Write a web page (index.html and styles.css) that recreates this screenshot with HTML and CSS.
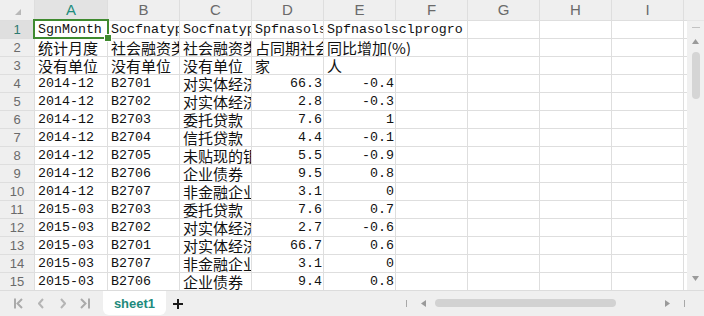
FILE: index.html
```html
<!DOCTYPE html>
<html>
<head>
<meta charset="utf-8">
<link rel="stylesheet" href="styles.css">
</head>
<body>
<div class="app">
  <div class="main">
    <div class="grid">
      <div class="corner"><svg class="tri" width="6" height="6" viewBox="0 0 6 6"><polygon points="6,0 6,6 0,6" fill="#b8b8b8"/></svg></div>
      <div class="ch sel">A</div><div class="ch">B</div><div class="ch">C</div><div class="ch">D</div><div class="ch">E</div><div class="ch">F</div><div class="ch">G</div><div class="ch">H</div><div class="ch">I</div><div class="ch"></div>

      <div class="rh sel">1</div><div class="c a1">SgnMonth</div><div class="c">Socfnatyp</div><div class="c">Socfnatyp</div><div class="c">Spfnasols</div><div class="c span2">Spfnasolsclprogro</div><div class="c"></div><div class="c"></div><div class="c"></div><div class="c"></div>

      <div class="rh">2</div><div class="c zh">统计月度</div><div class="c zh">社会融资类</div><div class="c zh">社会融资类</div><div class="c zh">占同期社会</div><div class="c zh span2">同比增加(%)</div><div class="c"></div><div class="c"></div><div class="c"></div><div class="c"></div>

      <div class="rh">3</div><div class="c zh">没有单位</div><div class="c zh">没有单位</div><div class="c zh">没有单位</div><div class="c zh">家</div><div class="c zh">人</div><div class="c"></div><div class="c"></div><div class="c"></div><div class="c"></div><div class="c"></div>

      <div class="rh">4</div><div class="c">2014-12</div><div class="c">B2701</div><div class="c zh">对实体经济</div><div class="c n">66.3</div><div class="c n">-0.4</div><div class="c"></div><div class="c"></div><div class="c"></div><div class="c"></div><div class="c"></div>

      <div class="rh">5</div><div class="c">2014-12</div><div class="c">B2702</div><div class="c zh">对实体经济</div><div class="c n">2.8</div><div class="c n">-0.3</div><div class="c"></div><div class="c"></div><div class="c"></div><div class="c"></div><div class="c"></div>

      <div class="rh">6</div><div class="c">2014-12</div><div class="c">B2703</div><div class="c zh">委托贷款</div><div class="c n">7.6</div><div class="c n">1</div><div class="c"></div><div class="c"></div><div class="c"></div><div class="c"></div><div class="c"></div>

      <div class="rh">7</div><div class="c">2014-12</div><div class="c">B2704</div><div class="c zh">信托贷款</div><div class="c n">4.4</div><div class="c n">-0.1</div><div class="c"></div><div class="c"></div><div class="c"></div><div class="c"></div><div class="c"></div>

      <div class="rh">8</div><div class="c">2014-12</div><div class="c">B2705</div><div class="c zh">未贴现的银</div><div class="c n">5.5</div><div class="c n">-0.9</div><div class="c"></div><div class="c"></div><div class="c"></div><div class="c"></div><div class="c"></div>

      <div class="rh">9</div><div class="c">2014-12</div><div class="c">B2706</div><div class="c zh">企业债券</div><div class="c n">9.5</div><div class="c n">0.8</div><div class="c"></div><div class="c"></div><div class="c"></div><div class="c"></div><div class="c"></div>

      <div class="rh">10</div><div class="c">2014-12</div><div class="c">B2707</div><div class="c zh">非金融企业</div><div class="c n">3.1</div><div class="c n">0</div><div class="c"></div><div class="c"></div><div class="c"></div><div class="c"></div><div class="c"></div>

      <div class="rh">11</div><div class="c">2015-03</div><div class="c">B2703</div><div class="c zh">委托贷款</div><div class="c n">7.6</div><div class="c n">0.7</div><div class="c"></div><div class="c"></div><div class="c"></div><div class="c"></div><div class="c"></div>

      <div class="rh">12</div><div class="c">2015-03</div><div class="c">B2702</div><div class="c zh">对实体经济</div><div class="c n">2.7</div><div class="c n">-0.6</div><div class="c"></div><div class="c"></div><div class="c"></div><div class="c"></div><div class="c"></div>

      <div class="rh">13</div><div class="c">2015-03</div><div class="c">B2701</div><div class="c zh">对实体经济</div><div class="c n">66.7</div><div class="c n">0.6</div><div class="c"></div><div class="c"></div><div class="c"></div><div class="c"></div><div class="c"></div>

      <div class="rh">14</div><div class="c">2015-03</div><div class="c">B2707</div><div class="c zh">非金融企业</div><div class="c n">3.1</div><div class="c n">0</div><div class="c"></div><div class="c"></div><div class="c"></div><div class="c"></div><div class="c"></div>

      <div class="rh">15</div><div class="c">2015-03</div><div class="c">B2706</div><div class="c zh">企业债券</div><div class="c n">9.4</div><div class="c n">0.8</div><div class="c"></div><div class="c"></div><div class="c"></div><div class="c"></div><div class="c"></div>
    </div>
    <div class="vscroll">
      <div class="vs-head"></div>
      <div class="vs-body">
        <div class="vs-dash"></div>
        <svg class="vs-up" width="7" height="5" viewBox="0 0 7 5"><polygon points="3.5,0 7,5 0,5" fill="#9a9a9a"/></svg>
        <div class="vs-thumb"></div>
        <svg class="vs-down" width="7" height="5" viewBox="0 0 7 5"><polygon points="0,0 7,0 3.5,5" fill="#9a9a9a"/></svg>
      </div>
    </div>
  </div>
  <div class="bottom">
    <div class="nav">
      <svg width="9" height="11" viewBox="0 0 9 11"><path d="M1 0.5V10.5M8 1L3.5 5.5L8 10" fill="none" stroke="#ababab" stroke-width="2"/></svg>
      <svg width="6" height="11" viewBox="0 0 6 11"><path d="M5 1L1 5.5L5 10" fill="none" stroke="#b5b5b5" stroke-width="2"/></svg>
      <svg width="6" height="11" viewBox="0 0 6 11"><path d="M1 1L5 5.5L1 10" fill="none" stroke="#b5b5b5" stroke-width="2"/></svg>
      <svg width="10" height="11" viewBox="0 0 10 11"><path d="M1 1L5.5 5.5L1 10M9 0.5V10.5" fill="none" stroke="#ababab" stroke-width="2"/></svg>
    </div>
    <div class="tab">sheet1</div>
    <svg class="plus" width="10" height="10" viewBox="0 0 10 10"><path d="M5 0V10M0 5H10" stroke="#1a1a1a" stroke-width="2"/></svg>
    <div class="hscroll">
      <div class="hs-bar"></div>
      <svg class="hs-left" width="5" height="7" viewBox="0 0 5 7"><polygon points="0,3.5 5,0 5,7" fill="#9a9a9a"/></svg>
      <div class="hs-thumb"></div>
      <svg class="hs-right" width="5" height="7" viewBox="0 0 5 7"><polygon points="0,0 5,3.5 0,7" fill="#9a9a9a"/></svg>
      <div class="hs-bar end"></div>
    </div>
  </div>
</div>
</body>
</html>
```

FILE: styles.css
```css
* { box-sizing: border-box; }
html, body { margin: 0; padding: 0; background: #ffffff; }
.app { width: 704px; height: 316px; overflow: hidden; display: flex; flex-direction: column; }
.main { display: flex; height: 291px; border-bottom: 1px solid #dcdcdc; }
.grid {
  display: grid;
  grid-template-columns: 34px 72px repeat(8, 71px) 3px;
  grid-template-rows: 20px repeat(15, 17px);
  gap: 1px;
  background: #dedede;
  width: 687px;
  height: 290px;
  align-content: start;
}
.corner { background: #efefef; position: relative; display: flex; align-items: flex-end; justify-content: flex-end; padding: 0 13px 5px 0; }
.ch {
  background: #efefef;
  font-family: "Liberation Sans", Arial, sans-serif;
  font-size: 15px;
  color: #6a6a6a;
  display: flex; align-items: center; justify-content: center;
  line-height: 20px;
}
.ch.sel { background: #e3e3e3; color: #1e8c7c; }
.rh {
  background: #efefef;
  font-family: "Liberation Sans", Arial, sans-serif;
  font-size: 13px;
  color: #6a6a6a;
  display: flex; align-items: center; justify-content: center;
}
.rh.sel { background: #dfdfdf; color: #2d7a70; }
.c {
  background: #ffffff;
  font-family: "Liberation Mono", "Noto Sans CJK SC", monospace;
  font-size: 13.3px;
  line-height: 17px;
  color: #111111;
  padding: 0 2px 0 3px;
  white-space: nowrap;
  overflow: hidden;
}
.c.zh { font-family: "Noto Sans CJK SC", sans-serif; font-size: 15px; letter-spacing: 0; line-height: 17px; }
.c.n { text-align: right; padding-right: 1px; }
.c.span2 { grid-column: span 2; }
.c.a1 { position: relative; overflow: visible; }
.c.a1::after {
  content: "";
  position: absolute;
  left: -2px; top: -2px; right: -2px; bottom: -1px;
  border: 2px solid #3f8a2f;
}
.c.a1::before {
  content: "";
  position: absolute;
  right: -5px; bottom: -4px;
  width: 6px; height: 6px;
  background: #3f8a2f;
  border: 1px solid #ffffff;
  z-index: 2;
}
.vscroll { width: 17px; display: flex; flex-direction: column; }
.vs-head { height: 20px; background: #efefef; }
.vs-body { flex: 1; background: #f0f0f0; display: flex; flex-direction: column; align-items: center; border-top: 1px solid #e6e6e6; }
.vs-dash { width: 8px; height: 1px; background: #c2c2c2; margin-top: 6px; }
.vs-up { margin-top: 11px; }
.vs-thumb { width: 8px; height: 47px; border-radius: 4px; background: #d5d5d5; margin-top: 8px; }
.vs-down { margin-top: auto; margin-bottom: 9px; }
.bottom {
  flex: 1;
  background: #efefef;
  display: flex;
  align-items: flex-start;
  padding-left: 14px;
}
.nav { display: flex; align-items: center; height: 25px; gap: 0; }
.nav svg:nth-child(2) { margin-left: 15px; }
.nav svg:nth-child(3) { margin-left: 16px; }
.nav svg:nth-child(4) { margin-left: 14px; }
.tab {
  margin-left: 13px;
  width: 63px;
  height: 24px;
  background: #ffffff;
  border-radius: 0 0 6px 6px;
  font-family: "Liberation Sans", Arial, sans-serif;
  font-weight: bold;
  font-size: 13px;
  color: #1e8a7c;
  display: flex; align-items: center; justify-content: center;
}
.plus { margin-left: 7px; margin-top: 8px; }
.hscroll { margin-left: auto; margin-right: 19px; display: flex; align-items: center; height: 18px; margin-top: 3px; }
.hs-bar { width: 1px; height: 7px; background: #a8a8a8; }
.hs-left { margin-left: 14px; }
.hs-thumb { width: 181px; height: 8px; border-radius: 4px; background: #d2d2d2; margin-left: 9px; }
.hs-right { margin-left: 49px; }
.hs-bar.end { margin-left: 14px; }
```
